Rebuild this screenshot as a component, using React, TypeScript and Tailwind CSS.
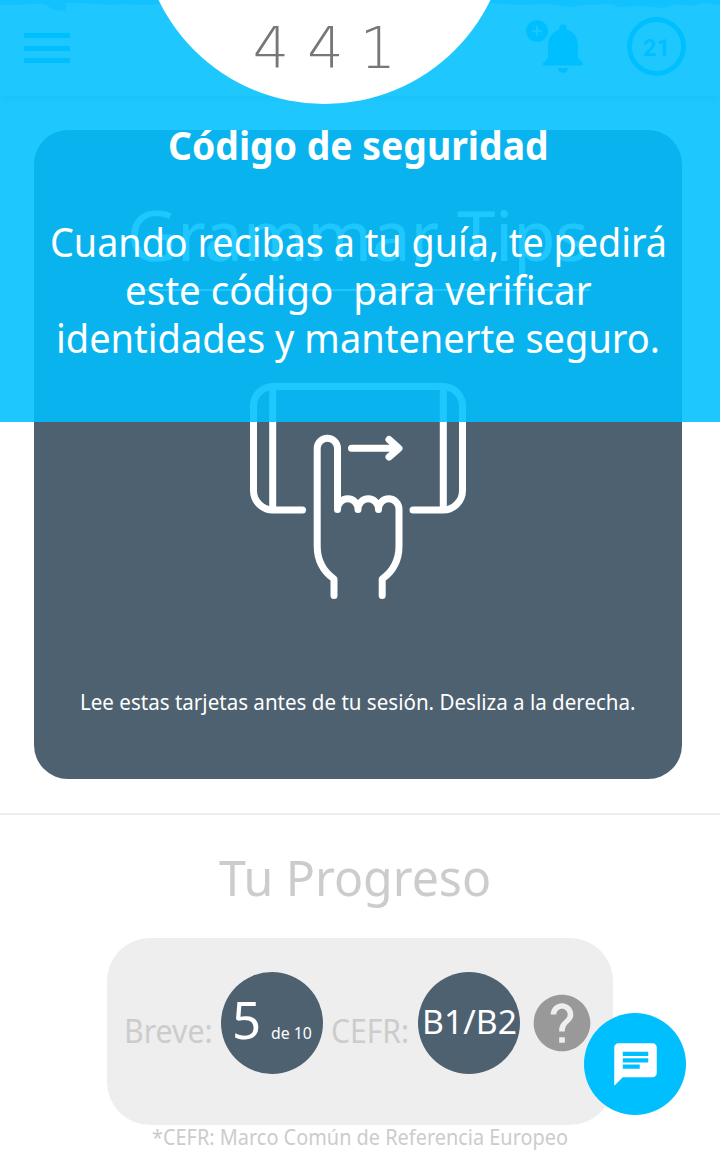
import { useLayoutEffect, useRef, useState, type ReactNode } from "react";
import { MdChat, MdHelp, MdNotifications } from "react-icons/md";

/* One line of text, condensed or widened to fill the width of its box. */
function Line({ className, children }: { className: string; children: ReactNode }) {
  const box = useRef<HTMLDivElement>(null);
  const text = useRef<HTMLSpanElement>(null);
  const [scale, setScale] = useState(1);
  useLayoutEffect(() => {
    if (box.current && text.current) {
      setScale(box.current.offsetWidth / text.current.offsetWidth);
    }
  }, []);
  return (
    <div ref={box} className={`shrink-0 whitespace-pre ${className}`}>
      <span ref={text} className="inline-block origin-left" style={{ transform: `scaleX(${scale})` }}>
        {children}
      </span>
    </div>
  );
}

function Header() {
  return (
    <header className="flex h-24 shrink-0 items-start bg-white pl-6 pt-4 text-[#00bfff] shadow-[0_1px_10px_rgba(0,0,0,0.28)]">
      <div className="mt-[17px] flex w-[46px] flex-col gap-[7.5px]">
        <div className="h-[5px] bg-current" />
        <div className="h-[5px] bg-current" />
        <div className="h-[5px] bg-current" />
      </div>
      <div className="relative ml-[463px] mt-[2px]">
        <MdNotifications size={60} />
        <svg className="absolute -left-[7px] top-[2px]" width="22" height="22" viewBox="0 0 22 22">
          <circle cx="11" cy="11" r="11" fill="currentColor" />
          <path d="M11 6v10M6 11h10" stroke="#fff" strokeWidth="1.6" />
        </svg>
      </div>
      <div className="ml-[34px] mt-[1px] flex size-[59px] items-center justify-center rounded-full border-[5px] border-current font-['Roboto'] text-[24px] font-bold leading-none">
        <span className="pt-[2px]">21</span>
      </div>
    </header>
  );
}

function SwipeDrawing() {
  return (
    <svg width="216" height="218" viewBox="250 382 216 218" fill="none" stroke="#fff" strokeWidth="7" strokeLinecap="round" strokeLinejoin="round">
      <path d="M302.5 510H273a19.5 19.5 0 0 1-19.5-19.5V406A19.5 19.5 0 0 1 273 386.5H443A19.5 19.5 0 0 1 462.5 406V490.500A19.500 19.500 0 0 1 443 510H413" />
      <path d="M272.700 387V509M443.300 387V509" />
      <path d="M334 595.500V579Q317.200 567 317.200 546V448.500a10.150 10.150 0 0 1 20.300 0V509.500a10.250 10.700 0 0 1 20.500 0a10.250 10.700 0 0 1 20.500 0a10.250 10.700 0 0 1 20.500 0V546Q399 567 382.200 579V595.500" />
      <path d="M351.500 448.300H398M389 439.500L399 448.300L389 457" />
    </svg>
  );
}

function TipCard() {
  return (
    <section className="ml-[34px] mt-[34px] flex h-[649px] w-[648px] shrink-0 flex-col items-center rounded-[34px] bg-[#4e6170] pt-[56px] text-white">
      <Line className="w-[462px] text-[70px] leading-[96px]">Grammar Tips</Line>
      <div className="mt-[7px] h-[2px] w-[464px] bg-white" />
      <div className="mt-[91px]">
        <SwipeDrawing />
      </div>
      <Line className="mt-[88px] w-[556px] text-[21px] leading-7">
        Lee estas tarjetas antes de tu sesión. Desliza a la derecha.
      </Line>
    </section>
  );
}

function Progress() {
  return (
    <section className="mt-[34px] flex flex-col border-t-2 border-[#eeeeee] text-[#cccccc]">
      <Line className="ml-[219px] mt-[30px] w-[272px] text-[50px] leading-[64px]">Tu Progreso</Line>
      <div className="ml-[107px] mt-[29px] flex h-[187px] w-[506px] items-start rounded-[43px] bg-[#eeeeee] pl-[17px] pt-[34px]">
        <Line className="mt-[39px] w-[89px] text-[32px] leading-10">Breve:</Line>
        <div className="ml-[8px] flex size-[102px] items-baseline rounded-full bg-[#4e6170] pl-[11px] pt-[15px] text-white">
          <Line className="w-[29px] text-[51px] leading-[64px]">5</Line>
          <Line className="ml-[10px] w-[41px] text-[17px] leading-6">de 10</Line>
        </div>
        <Line className="ml-[8px] mt-[39px] w-[78px] text-[32px] leading-10">CEFR:</Line>
        <div className="ml-[9px] flex size-[102px] rounded-full bg-[#4e6170] pl-[4px] pt-[30px] text-white">
          <Line className="w-[95px] text-[33px] leading-10">B1/B2</Line>
        </div>
        <MdHelp size={68} className="ml-[8px] mt-[17px] shrink-0 text-[#999999]" />
      </div>
      <Line className="ml-[152px] mt-[-2px] w-[416px] text-[21px] leading-7">
        *CEFR: Marco Común de Referencia Europeo
      </Line>
    </section>
  );
}

function SecurityPanel() {
  return (
    <aside className="absolute inset-x-0 top-0 flex h-[422px] flex-col items-center overflow-hidden bg-[#00bfff]/88 pr-1 text-white">
      <svg className="absolute left-0 top-0" width="720" height="12" viewBox="0 0 720 12" fill="#12c2ff">
        <path d="M0 0H720V5L704 3L690 6L676 4L664 8L640 6L620 7L612 4L585 5L570 7L545 4L520 5L490 3L155 4L145 5L120 4L112 5L80 3H66V10.500Q54 12 48 6L44 4L30 4L22 5L0 5Z" />
      </svg>
      <div className="absolute left-[139.500px] top-[-265px] size-[369px] rounded-full bg-white" />
      <div className="relative mr-[69px] mt-[13px] grid h-[70px] grid-cols-[55px_54px_51px] justify-items-center font-['DejaVu_Sans_Light','DejaVu_Sans'] text-[57px] font-extralight leading-[70px] text-[#777]">
        <span>4</span>
        <span>4</span>
        <span>1</span>
      </div>
      <Line className="mt-[38px] w-[381px] text-[39px] font-bold leading-[48px]">Código de seguridad</Line>
      <Line className="mt-[49px] w-[617px] text-[40px] leading-[48px]">Cuando recibas a tu guía, te pedirá</Line>
      <Line className="w-[467px] text-[40px] leading-[48px]">{"este código  para verificar"}</Line>
      <Line className="w-[604px] text-[40px] leading-[48px]">identidades y mantenerte seguro.</Line>
    </aside>
  );
}

export default function App() {
  return (
    <main className="relative flex h-[1156px] w-[720px] flex-col overflow-hidden bg-white font-['Noto_Sans',sans-serif]">
      <Header />
      <TipCard />
      <Progress />
      <SecurityPanel />
      <button aria-label="Chat" className="absolute left-[584px] top-[1013px] flex size-[102px] items-center justify-center rounded-full bg-[#00bfff] text-white">
        <MdChat size={51} />
      </button>
    </main>
  );
}
